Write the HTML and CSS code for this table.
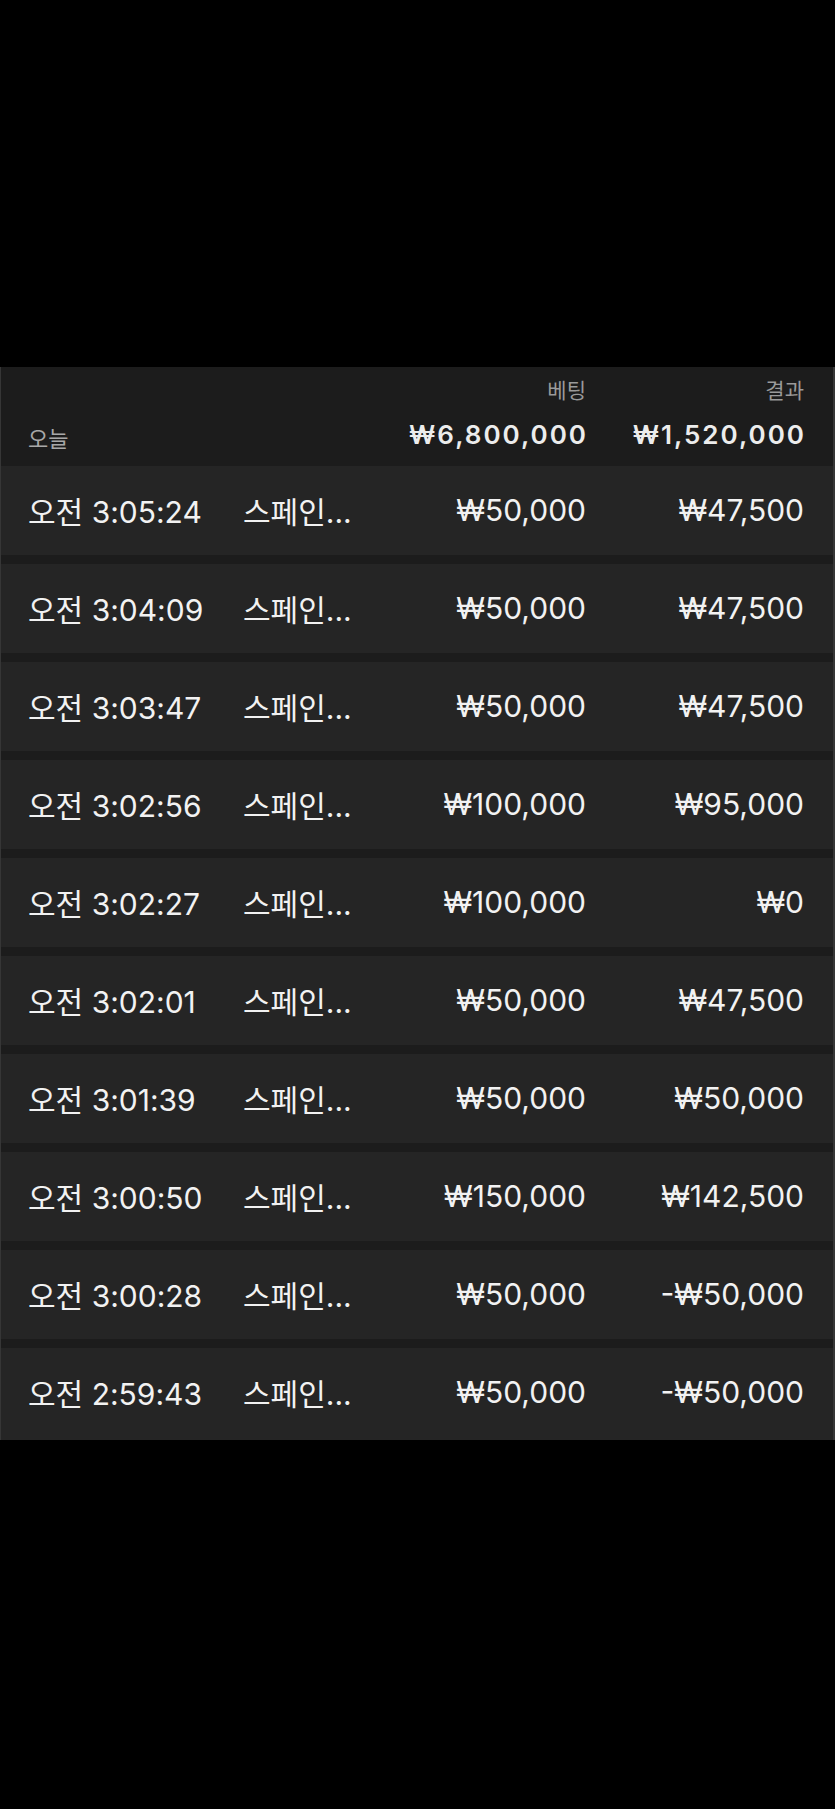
FILE: index.html
```html
<!DOCTYPE html>
<html lang="ko">
<head>
  <meta charset="UTF-8" />
  <meta name="viewport" content="width=device-width, initial-scale=1.0" />
  <title>베팅 내역</title>
  <link rel="stylesheet" href="styles.css">
</head>
<body>
  <div class="top-space"></div>
  <div class="history">
    <div class="summary">
      <div class="day">오늘</div>
      <div class="total">
        <span class="label">베팅</span>
        <span class="sum">₩6,800,000</span>
      </div>
      <div class="total">
        <span class="label">결과</span>
        <span class="sum">₩1,520,000</span>
      </div>
    </div>

    <div class="row">
      <span class="time">오전 3:05:24</span>
      <span class="game">스페인...</span>
      <span class="amount">₩50,000</span>
      <span class="amount">₩47,500</span>
    </div>
    <div class="row">
      <span class="time">오전 3:04:09</span>
      <span class="game">스페인...</span>
      <span class="amount">₩50,000</span>
      <span class="amount">₩47,500</span>
    </div>
    <div class="row">
      <span class="time">오전 3:03:47</span>
      <span class="game">스페인...</span>
      <span class="amount">₩50,000</span>
      <span class="amount">₩47,500</span>
    </div>
    <div class="row">
      <span class="time">오전 3:02:56</span>
      <span class="game">스페인...</span>
      <span class="amount">₩100,000</span>
      <span class="amount">₩95,000</span>
    </div>
    <div class="row">
      <span class="time">오전 3:02:27</span>
      <span class="game">스페인...</span>
      <span class="amount">₩100,000</span>
      <span class="amount">₩0</span>
    </div>
    <div class="row">
      <span class="time">오전 3:02:01</span>
      <span class="game">스페인...</span>
      <span class="amount">₩50,000</span>
      <span class="amount">₩47,500</span>
    </div>
    <div class="row">
      <span class="time">오전 3:01:39</span>
      <span class="game">스페인...</span>
      <span class="amount">₩50,000</span>
      <span class="amount">₩50,000</span>
    </div>
    <div class="row">
      <span class="time">오전 3:00:50</span>
      <span class="game">스페인...</span>
      <span class="amount">₩150,000</span>
      <span class="amount">₩142,500</span>
    </div>
    <div class="row">
      <span class="time">오전 3:00:28</span>
      <span class="game">스페인...</span>
      <span class="amount">₩50,000</span>
      <span class="amount">-₩50,000</span>
    </div>
    <div class="row">
      <span class="time">오전 2:59:43</span>
      <span class="game">스페인...</span>
      <span class="amount">₩50,000</span>
      <span class="amount">-₩50,000</span>
    </div>
  </div>
</body>
</html>
```

FILE: styles.css
```css
body {
  font-family: 'Inter', 'Noto Sans CJK KR', sans-serif;
  background: #000;
  color: #f2f2f2;
  margin: 0;
  padding: 0;
}
.top-space {
  height: 367px;
}
.history {
  background: #1c1c1c;
  border-left: 1px solid #363636;
  border-right: 2px solid #363636;
}
.summary,
.row {
  display: grid;
  grid-template-columns: 215px 142px 201px 218px;
  padding: 0 29px 0 27px;
}
.summary {
  height: 99px;
  align-items: end;
}
.day {
  grid-column: span 2;
  color: #a8a8a8;
  font-size: 22px;
  padding-bottom: 13px;
}
.total {
  display: flex;
  flex-direction: column;
  align-items: flex-end;
  padding-bottom: 16px;
}
.label {
  color: #9a9a9a;
  font-size: 21px;
  margin-bottom: 15px;
}
.sum {
  color: #ececec;
  font-size: 26px;
  font-weight: 600;
  letter-spacing: 2px;
  margin-right: -2px;
}
.row {
  height: 89px;
  margin-bottom: 9px;
  padding-bottom: 2px;
  box-sizing: border-box;
  align-items: center;
  background: #252525;
  font-size: 30px;
}
.row:last-child {
  margin-bottom: 0;
  height: 92px;
  padding-bottom: 5px;
}
.game {
  white-space: nowrap;
}
.amount {
  text-align: right;
}
```
